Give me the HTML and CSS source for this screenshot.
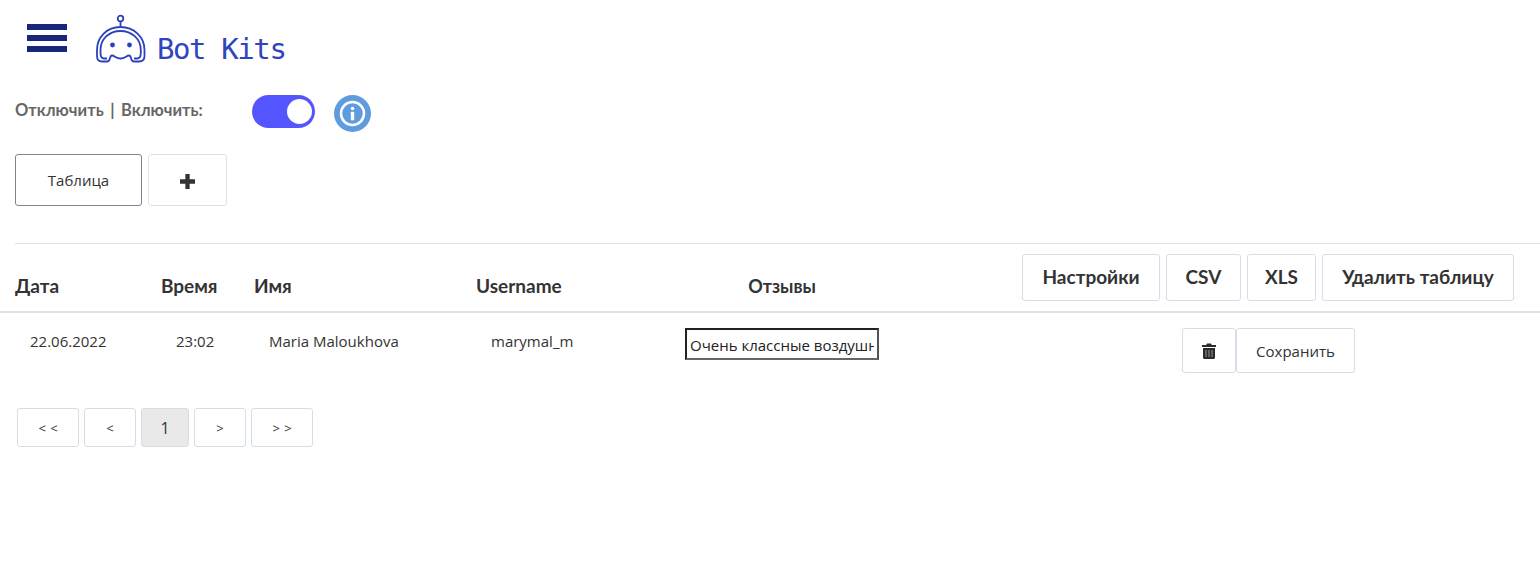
FILE: index.html
```html
<!DOCTYPE html>
<html lang="en">
<head>
    <meta charset="UTF-8">
    <meta name="viewport" content="width=device-width, initial-scale=1.0">
    <title>Bot Kits</title>
    <link rel="stylesheet" href="styles.css">
</head>
<body>
    <header class="topbar">
        <div class="burger"><span></span><span></span><span></span></div>
        <svg class="logo" width="52" height="52" viewBox="0 0 52 52" fill="none" stroke="#2b41bd" stroke-width="1.800">
            <circle cx="24.500" cy="4.500" r="2.800"/>
            <path d="M24.500 7.300V13"/>
            <path d="M24.500 13C11 13 1 23 1 36V42C1 46 3 47.500 6 47.500H11C15 47.500 13 41.500 16 41.500C18.500 41.500 20 44.500 24.500 44.500S30.500 41.500 33 41.500C36 41.500 34 47.500 38 47.500H43C46 47.500 48.500 46 48.500 42V36C48.500 23 38 13 24.500 13Z"/>
            <path d="M11 44.500H8C5.500 44.500 4.500 42 4.500 39V36C4.500 25 13 17 24.500 17S44.800 25 44.800 36V39C44.800 42 43.500 44.500 41 44.500H38"/>
            <circle cx="16.500" cy="31" r="2.400" fill="#2b41bd" stroke="none"/>
            <circle cx="33.500" cy="31" r="2.400" fill="#2b41bd" stroke="none"/>
        </svg>
        <span class="brand">Bot Kits</span>
    </header>

    <div class="switch-row">
        <span class="switch-label">Отключить | Включить:</span>
        <div class="toggle"><span class="knob"></span></div>
        <svg class="info" width="37" height="37" viewBox="0 0 37 37">
            <circle cx="18.500" cy="18.500" r="18.500" fill="#5e9bdf"/>
            <circle cx="18.500" cy="18.500" r="11.500" fill="none" stroke="#fff" stroke-width="2.500"/>
            <circle cx="18.500" cy="13.500" r="1.800" fill="#fff"/>
            <rect x="16.800" y="16.800" width="3.400" height="8.500" fill="#fff"/>
        </svg>
    </div>

    <div class="tabs">
        <button class="tab active">Таблица</button>
        <button class="tab add">
            <svg width="15" height="15" viewBox="0 0 14 14"><path d="M5 0h4v5h5v4H9v5H5V9H0V5h5z" fill="#333"/></svg>
        </button>
    </div>

    <hr class="divider">

    <div class="grid head">
        <div class="col-title">Дата</div>
        <div class="col-title">Время</div>
        <div class="col-title">Имя</div>
        <div class="col-title">Username</div>
        <div class="col-title center">Отзывы</div>
        <div class="head-actions">
            <button class="btn-big settings">Настройки</button>
            <button class="btn-big csv">CSV</button>
            <button class="btn-big xls">XLS</button>
            <button class="btn-big remove">Удалить таблицу</button>
        </div>
    </div>

    <div class="grid data">
        <div class="cell">22.06.2022</div>
        <div class="cell">23:02</div>
        <div class="cell">Maria Maloukhova</div>
        <div class="cell">marymal_m</div>
        <input class="review" type="text" value="Очень классные воздушные шары">
        <div class="row-actions">
            <button class="btn-small trash">
                <svg width="14" height="16" viewBox="0 0 14 16"><path d="M1 5h12v9.500a1.500 1.500 0 0 1-1.500 1.500h-9A1.500 1.500 0 0 1 1 14.500zM0 2h4.200l.8-1.500h4L9.800 2H14v2H0z" fill="#2b2b2b"/><path d="M4 7v7M7 7v7M10 7v7" stroke="#999" stroke-width="1"/></svg>
            </button>
            <button class="btn-small save">Сохранить</button>
        </div>
    </div>

    <div class="pager">
        <button class="page wide">&lt; &lt;</button>
        <button class="page">&lt;</button>
        <button class="page current">1</button>
        <button class="page">&gt;</button>
        <button class="page wide">&gt; &gt;</button>
    </div>
</body>
</html>
```

FILE: styles.css
```css
body {
    margin: 0;
    padding: 0;
    background-color: #fff;
    color: #333;
    font-family: "Open Sans", sans-serif;
    font-size: 15px;
    overflow-x: hidden;
}
button {
    font-family: inherit;
    background: #fff;
    color: #333;
    cursor: pointer;
    padding: 0;
}
.topbar {
    display: flex;
    align-items: flex-start;
    height: 95px;
    padding-left: 27px;
    box-sizing: border-box;
}
.burger {
    display: flex;
    flex-direction: column;
    gap: 5px;
    width: 40px;
    margin-top: 24px;
}
.burger span {
    height: 6px;
    background: #19277a;
}
.logo {
    margin: 14px 0 0 29px;
}
.brand {
    margin: 28px 0 0 9px;
    font-family: "DejaVu Sans Mono", monospace;
    font-size: 29px;
    line-height: 42px;
    letter-spacing: -1.400px;
    color: #3044c0;
}
.switch-row {
    display: flex;
    align-items: flex-start;
    height: 59px;
    padding-left: 15px;
}
.switch-label {
    width: 237px;
    margin-top: 5px;
    font-family: Lato, sans-serif;
    font-weight: 700;
    font-size: 16.500px;
    word-spacing: 2.500px;
    line-height: 21px;
    color: #666;
}
.toggle {
    width: 63px;
    height: 33px;
    border-radius: 17px;
    background: #5555ff;
    position: relative;
}
.knob {
    position: absolute;
    right: 3px;
    top: 4px;
    width: 25px;
    height: 25px;
    border-radius: 50%;
    background: #fff;
}
.info {
    margin-left: 19px;
}
.tabs {
    display: flex;
    gap: 6px;
    height: 52px;
    padding-left: 15px;
}
.tab {
    height: 52px;
    border: 1px solid #dee2e6;
    border-radius: 3px;
    font-size: 15px;
}
.tab.active {
    width: 127px;
    border-color: #7a8591;
}
.tab.add {
    width: 79px;
    display: flex;
    align-items: center;
    justify-content: center;
    padding-top: 2px;
}
.divider {
    height: 1px;
    margin: 37px 0 0 15px;
    border: none;
    background: #dee2e6;
}
.grid {
    display: grid;
    grid-template-columns: 146px 93px 222px 209px 194px 1fr;
    padding-left: 15px;
}
.head {
    height: 57px;
    margin-top: 10px;
    border-bottom: 2px solid #dee2e6;
}
.col-title {
    margin-top: 20px;
    font-family: Lato, sans-serif;
    font-weight: 700;
    font-size: 19px;
    line-height: 24px;
    color: #333;
}
.col-title.center {
    text-align: center;
    font-size: 18px;
}
.head-actions {
    display: flex;
    gap: 6px;
    height: 47px;
    margin-left: 143px;
}
.btn-big {
    height: 47px;
    padding: 0 0 2px;
    border: 1px solid #d5dde6;
    border-radius: 3px;
    font-family: Lato, sans-serif;
    font-weight: 700;
    font-size: 19px;
    white-space: nowrap;
}
.btn-big.settings {
    width: 138px;
}
.btn-big.csv {
    width: 75px;
}
.btn-big.xls {
    width: 69px;
}
.btn-big.remove {
    width: 192px;
}
.data {
    margin-top: 15px;
    height: 45px;
}
.cell {
    padding-left: 15px;
    line-height: 26px;
    color: #333;
}
.review {
    box-sizing: border-box;
    width: 194px;
    height: 32px;
    padding: 3px 3px 1px;
    border: 2px solid;
    border-color: #222 #555 #666 #222;
    font-family: inherit;
    font-size: 15px;
    color: #222;
}
.row-actions {
    display: flex;
    margin-left: 303px;
}
.btn-small {
    height: 45px;
    border: 1px solid #d5dde6;
    border-radius: 3px;
    font-size: 15px;
}
.btn-small.trash {
    width: 54px;
    display: flex;
    align-items: center;
    justify-content: center;
}
.btn-small.save {
    width: 119px;
}
.pager {
    display: flex;
    gap: 5px;
    margin: 35px 0 0 17px;
}
.page {
    width: 52px;
    height: 39px;
    border: 1px solid #d5dde6;
    border-radius: 3px;
    font-size: 13px;
}
.page.wide {
    width: 62px;
    word-spacing: 1px;
}
.page.current {
    width: 48px;
    background: #e9e9e9;
    font-size: 16px;
}
```
